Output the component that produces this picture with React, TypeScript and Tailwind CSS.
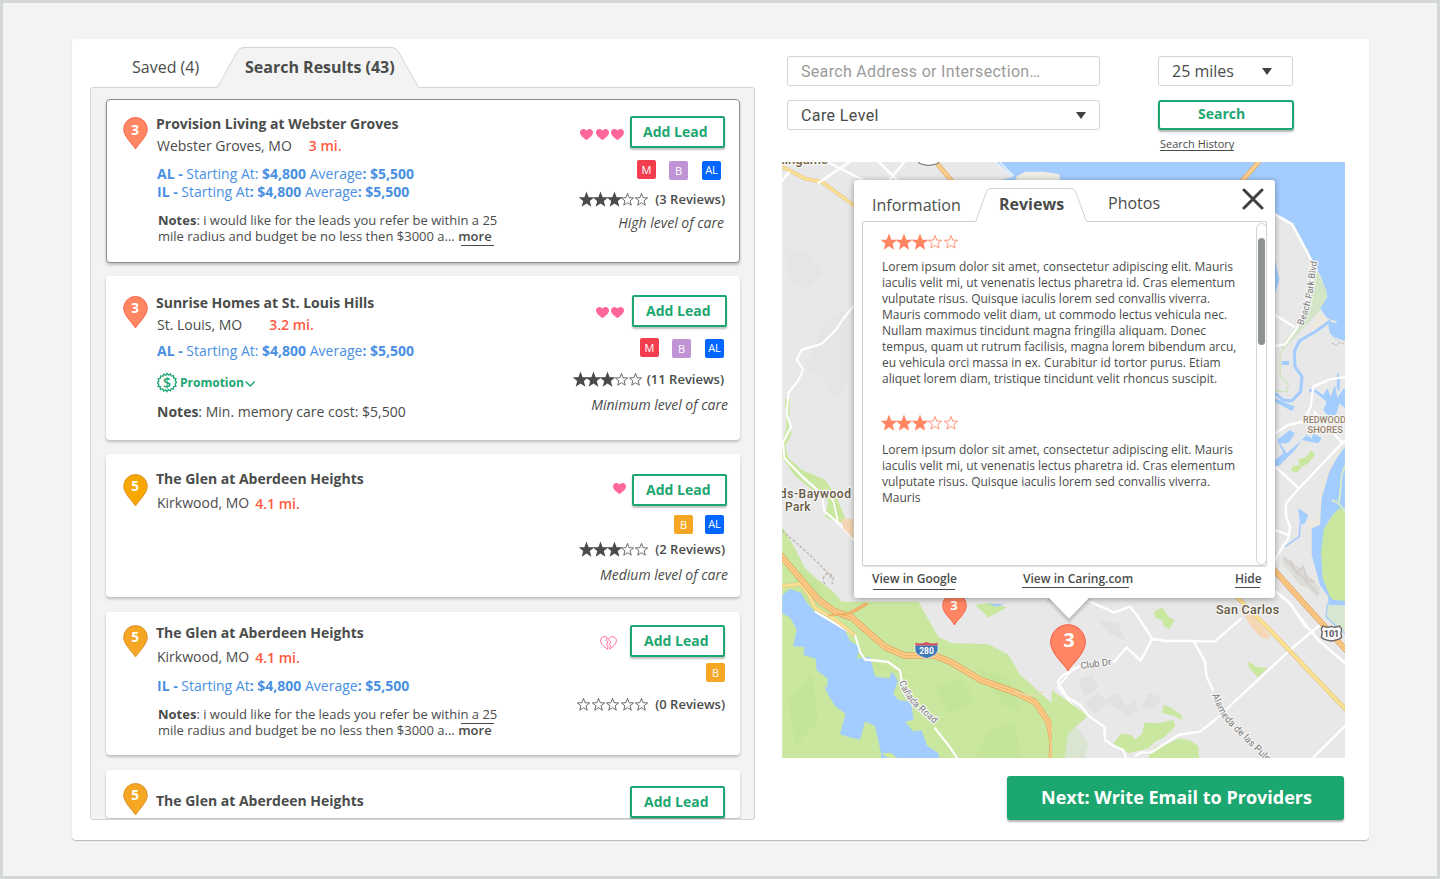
import type { ReactNode } from "react";

const STAR = "M12 .8l3 7.9 8.3.4-6.5 5.3 2.2 8.1-7-4.6-7 4.6 2.2-8.1L.7 9.100l8.300-.4z";

function Star({ filled, className }: { filled: boolean; className: string }) {
  return (
    <svg viewBox="0 0 24 24" className={className} overflow="visible">
      <path
        d={STAR}
        fill={filled ? "currentColor" : "none"}
        stroke="currentColor"
        strokeWidth={filled ? 2.4 : 1.5}
        strokeLinejoin="miter"
      />
    </svg>
  );
}

function Stars({ count, gap, size = "h-[13px] w-[13px]" }: { count: number; gap: string; size?: string }) {
  return (
    <div className={`flex ${gap}`}>
      {[0, 1, 2, 3, 4].map((i) => (
        <Star key={i} filled={i < count} className={size} />
      ))}
    </div>
  );
}

function Pin({ value, tone, baseline = 17.2 }: { value: string; tone: "coral" | "amber" | "gold"; baseline?: number }) {
  const fill = tone === "coral" ? "#ff8563" : tone === "amber" ? "#f5a623" : "#f8a700";
  const stroke = tone === "coral" ? "#fa654a" : "#d9932a";
  return (
    <svg width="25" height="33" viewBox="0 0 25 33" className="shrink-0">
      <path
        d="M12.500 32 C10 27.500 .7 19.500 .7 12.300 A11.800 11.800 0 0 1 24.300 12.300 C24.300 19.500 15 27.500 12.500 32Z"
        fill={fill}
        stroke={stroke}
        strokeWidth="1"
      />
      <text x="12" y={baseline} textAnchor="middle" fontSize="13.500" fontWeight="700" fill="#fff">
        {value}
      </text>
    </svg>
  );
}

function Heart() {
  return (
    <svg width="13" height="11" viewBox="0 0 13 11">
      <path d="M6.500 11 C4.500 9.200 0 6.800 0 3.400 C0 -.4 4.800 -1 6.500 1.500 C8.200 -1 13 -.4 13 3.400 C13 6.800 8.500 9.200 6.500 11Z" fill="#ff6699" />
    </svg>
  );
}

function BrokenHeart() {
  return (
    <svg width="17" height="14" viewBox="0 0 17 14" fill="none" stroke="#ff6699" strokeWidth="1">
      <path d="M7.300 13.200 C5 11 .6 8.500 .6 4.500 C.6 1 5 -.6 7.300 2 L6.200 4.300 L8 6 L6.500 8.500 L8.200 10.200 L7.300 13.200" />
      <path d="M9.700 13.200 C12 11 16.400 8.500 16.400 4.500 C16.400 1 12 -.6 9.300 2 L8.800 4 L10.800 6 L9.300 8.300 L10.600 10.300 L9.300 13.200" />
    </svg>
  );
}

function Hearts({ count }: { count: number }) {
  return (
    <div className="flex gap-[2.500px]">
      {Array.from({ length: count }, (_, i) => (
        <Heart key={i} />
      ))}
    </div>
  );
}

function AddLead({ indent = "pl-[12px]" }: { indent?: string }) {
  return (
    <button
      className={`flex h-8 w-[95px] items-center rounded-[2px] border-2 border-[#1ca670] bg-white pb-[2px] text-[14px] font-bold text-[#1ca670] shadow-[0_2px_2px_rgba(0,0,0,0.25)] ${indent}`}
    >
      Add Lead
    </button>
  );
}

function Badge({ label, className }: { label: string; className: string }) {
  return (
    <span className={`flex h-[19px] w-[19px] items-center justify-center rounded-[2px] text-[11px] text-white ${className}`}>
      {label}
    </span>
  );
}

function Title({ children }: { children: ReactNode }) {
  return <h3 className="h-5 whitespace-nowrap text-[14px] leading-5 font-bold">{children}</h3>;
}

function Place({ name, miles, gap, drop = "" }: { name: string; miles: string; gap: string; drop?: string }) {
  return (
    <p className={`flex h-5 items-start whitespace-nowrap pl-px text-[14px] leading-5 ${gap}`}>
      <span>{name}</span>
      <span className={`font-semibold text-[#ff5a40] ${drop}`}>{miles}</span>
    </p>
  );
}

function Price({ kind, boldColon = false }: { kind: string; boldColon?: boolean }) {
  return (
    <p className="h-[18px] whitespace-nowrap pl-px text-[14px] leading-[18px] text-[#4a90e2]">
      <b>{kind} - </b>Starting At{boldColon ? <b>: </b> : ": "}
      <b>$4,800</b> Average<b>: $5,500</b>
    </p>
  );
}

function LongNotes({ line }: { line: string }) {
  return (
    <div className="whitespace-nowrap pl-[2px] text-[13px] leading-4">
      <p>
        <b>Notes</b>: i would like for the leads you refer be within a 25
      </p>
      <p>
        mile radius and budget be no less then $3000 a...{" "}
        <a className="relative font-semibold">
          more
          <span className={`absolute left-[3px] h-px w-[33px] bg-[#4a4c4b] ${line}`} />
        </a>
      </p>
    </div>
  );
}

function Reviews({ count, stars, gap, between }: { count: number; stars: number; gap: string; between: string }) {
  return (
    <div className={`flex h-4 items-center ${between}`}>
      <Stars count={stars} gap={gap} />
      <span className="whitespace-nowrap text-[13px] leading-4 font-semibold">({count} Reviews)</span>
    </div>
  );
}

function Care({ children }: { children: ReactNode }) {
  return <p className="h-5 whitespace-nowrap text-[14px] leading-5 italic">{children}</p>;
}

function Card({ className, children }: { className: string; children: ReactNode }) {
  return (
    <article className={`flex w-[634px] shrink-0 items-start rounded-[4px] border bg-white pl-4 ${className}`}>
      {children}
    </article>
  );
}

const PLAIN = "border-transparent shadow-[0_2px_3px_rgba(0,0,0,0.22)]";

function ResultsPanel() {
  return (
    <section className="w-[665px]">
      <div className="relative h-[48px]">
        <svg className="absolute top-[8px] left-0" width="665" height="42" viewBox="90 47 665 42">
          <path d="M217 88 L237.500 51 Q240 47.500 244 47.500 H392 Q396 47.500 398 51 L419 88" fill="#f3f3f3" stroke="#d2d6d6" />
          <path d="M217.500 88.500 H418.500" stroke="#f3f3f3" strokeWidth="2" />
        </svg>
        <nav className="relative flex items-center pt-[16px] pl-[42px] text-[16px] leading-6">
          <span className="w-[113px]">Saved (4)</span>
          <span className="font-bold">Search Results (43)</span>
        </nav>
      </div>
      <Frame />
    </section>
  );
}

function Frame() {
  return (
    <div className="flex h-[733px] flex-col overflow-hidden rounded-[3px] border border-[#d2d6d6] bg-[#f3f3f3] pt-[11px] pl-[15px] [clip-path:polygon(0_0,127px_0,128px_1px,329px_1px,330px_0,100%_0,100%_100%,0_100%)]">
      <Card className="h-[164px] border-[#8d8f8e] shadow-[0_2px_3px_rgba(0,0,0,0.22)]">
        <div className="pt-[17px]">
          <Pin value="3" tone="coral" baseline={18.2} />
        </div>
        <div className="flex-1 pt-[14px] pl-[8px]">
          <Title>Provision Living at Webster Groves</Title>
          <div className="pt-[2px]">
            <Place name="Webster Groves, MO" miles="3 mi." gap="gap-[17px]" />
          </div>
          <div className="pt-[9px]">
            <Price kind="AL" />
            <Price kind="IL" boldColon />
          </div>
          <div className="pt-[11px]">
            <LongNotes line="top-[18px]" />
          </div>
        </div>
        <div className="flex flex-col items-end pt-[16px] pr-[14px]">
          <div className="flex items-center gap-[6px]">
            <div className="pt-[5px]">
              <Hearts count={3} />
            </div>
            <AddLead indent="pl-[11px]" />
          </div>
          <div className="flex pt-[12px] pr-[4px]">
            <Badge label="M" className="bg-[#f23d4f] pt-px" />
            <Badge label="B" className="mt-px ml-[13px] bg-[#c093d4] pt-px" />
            <Badge label="AL" className="mt-px ml-[14px] bg-[#0066ff]" />
          </div>
          <div className="pt-[11px]">
            <Reviews count={3} stars={3} gap="gap-[0.750px]" between="gap-[7px]" />
          </div>
          <div className="pt-[6px] pr-px">
            <Care>High level of care</Care>
          </div>
        </div>
      </Card>

      <Card className={`mt-[13px] h-[164px] ${PLAIN}`}>
        <div className="pt-[19px]">
          <Pin value="3" tone="coral" />
        </div>
        <div className="flex-1 pt-[16px] pl-[8px]">
          <Title>Sunrise Homes at St. Louis Hills</Title>
          <div className="pt-[2px]">
            <Place name="St. Louis, MO" miles="3.2 mi." gap="gap-[27px]" />
          </div>
          <div className="pt-[7px]">
            <Price kind="AL" />
          </div>
          <button className="mt-[12px] flex h-[21px] items-center pl-px text-[#1ca670]">
            <svg width="20" height="21" viewBox="0 0 20 20" fill="none" stroke="currentColor" strokeWidth="1.300">
              <path d="M10 .8l1.500 1.800 2-1.200.8 2.200 2.300-.4.1 2.400 2.300.5-.9 2.100 1.600 1.800-1.700 1.600.9 2.200-2.300.4-.1 2.400-2.300-.4-.9 2.200-2-1.200L10 19.200l-1.500-1.800-2 1.200-.8-2.200-2.300.4-.1-2.400L1 14l.9-2.200L.3 10l1.700-1.600L1.100 6.200l2.300-.4.100-2.400 2.300.4.900-2.200 2 1.200z" />
              <text x="10" y="15" textAnchor="middle" fontSize="14" fontWeight="600" fill="currentColor" stroke="none">$</text>
            </svg>
            <span className="pl-[3px] text-[12px] leading-5 font-bold">Promotion</span>
            <svg width="11" height="8" viewBox="0 0 11 8" fill="none" stroke="currentColor" strokeWidth="1.500" className="mt-[3px] ml-px">
              <path d="M.6 1.500 L5.200 6 L9.800 1.500" />
            </svg>
          </button>
          <p className="pt-[9px] pl-px text-[14px] leading-5">
            <b>Notes</b>: Min. memory care cost: $5,500
          </p>
        </div>
        <div className="flex flex-col items-end pt-[18px] pr-[11px]">
          <div className="flex items-center gap-[8px] pr-px">
            <div className="pt-[3px]">
              <Hearts count={2} />
            </div>
            <AddLead />
          </div>
          <div className="flex pt-[11px] pr-[4px]">
            <Badge label="M" className="bg-[#f23d4f] pt-px" />
            <Badge label="B" className="mt-px ml-[13px] bg-[#c093d4] pt-px" />
            <Badge label="AL" className="mt-px ml-[14px] bg-[#0066ff]" />
          </div>
          <div className="pt-[13px] pr-[4px]">
            <Reviews count={11} stars={3} gap="gap-[0.750px]" between="gap-[5px]" />
          </div>
          <div className="pt-[8px]">
            <Care>Minimum level of care</Care>
          </div>
        </div>
      </Card>

      <Card className={`mt-[14px] h-[143px] ${PLAIN}`}>
        <div className="pt-[19px]">
          <Pin value="5" tone="gold" />
        </div>
        <div className="flex-1 pt-[14px] pl-[8px]">
          <Title>The Glen at Aberdeen Heights</Title>
          <div className="pt-[4px]">
            <Place name="Kirkwood, MO" miles="4.1 mi." gap="gap-[6px]" drop="pt-px" />
          </div>
        </div>
        <div className="flex flex-col items-end pt-[19px] pr-[11px]">
          <div className="flex items-start gap-[6px] pr-px">
            <div className="pt-[9px]">
              <Hearts count={1} />
            </div>
            <AddLead />
          </div>
          <div className="flex pt-[9px] pr-[4px]">
            <Badge label="B" className="bg-[#f5a623] pt-px" />
            <Badge label="AL" className="ml-[12px] bg-[#0066ff]" />
          </div>
          <div className="pt-[7px] pr-[3px]">
            <Reviews count={2} stars={3} gap="gap-[0.750px]" between="gap-[7px]" />
          </div>
          <div className="pt-[8px]">
            <Care>Medium level of care</Care>
          </div>
        </div>
      </Card>

      <Card className={`mt-[15px] h-[143px] ${PLAIN}`}>
        <div className="pt-[12px]">
          <Pin value="5" tone="amber" baseline={17} />
        </div>
        <div className="flex-1 pt-[10px] pl-[8px]">
          <Title>The Glen at Aberdeen Heights</Title>
          <div className="pt-[4px]">
            <Place name="Kirkwood, MO" miles="4.1 mi." gap="gap-[6px]" drop="pt-px" />
          </div>
          <div className="pt-[10px]">
            <Price kind="IL" boldColon />
          </div>
          <div className="pt-[11px]">
            <LongNotes line="top-[2px]" />
          </div>
        </div>
        <div className="flex flex-col items-end pt-[12px] pr-[14px]">
          <div className="flex items-center gap-[13px]">
            <div className="pt-[3px]">
              <BrokenHeart />
            </div>
            <AddLead />
          </div>
          <div className="pt-[6px]">
            <Badge label="B" className="bg-[#f5a623] pt-px" />
          </div>
          <div className="pt-[14px]">
            <Reviews count={0} stars={0} gap="gap-[1.500px]" between="gap-[7px]" />
          </div>
        </div>
      </Card>

      <Card className={`mt-[15px] h-[48px] ${PLAIN}`}>
        <div className="pt-[12px]">
          <Pin value="5" tone="amber" baseline={17} />
        </div>
        <div className="flex-1 pt-[20px] pl-[8px]">
          <Title>The Glen at Aberdeen Heights</Title>
        </div>
        <div className="pt-[15px] pr-[14px]">
          <AddLead />
        </div>
      </Card>
    </div>
  );
}

function MapDrawing() {
  return (
    <svg className="block" width="563" height="596" viewBox="782 162 563 596">
      <rect x="782" y="162" width="563" height="596" fill="#e8e8e8" />

      {/* western hills and reservoir */}
      <g transform="translate(775 155) scale(.33333 .39355)">
        <path d="M150 420 L240 380 V560 L180 620 L140 560 L90 540Z M30 240 L100 250 L150 300 L100 340 L50 320Z" fill="#e2e2e2" opacity=".5" />
        <path d="M22 945 L60 1000 L90 1050 L130 1080 L175 1110 L200 1135 H430 L450 1165 L490 1225 L530 1240 L640 1243 L700 1270 L735 1320 L800 1370 L870 1420 V1560 H22Z" fill="#c9e79f" />
        <path d="M30 620 H45 L42 680 L50 710 L30 740 L40 770 L80 800 L150 825 L185 870 L215 930 L190 935 L150 920 L160 880 L110 850 L60 815 L22 770 V730 L35 690Z" fill="#c9e79f" />
        <path d="M40 1040 L120 1080 L190 1200 L300 1290 L420 1330 L300 1300 L200 1250 L100 1150Z M600 1300 L700 1330 L740 1420 L690 1400Z M480 1350 L560 1330 L600 1390 L520 1420Z M640 1460 L720 1440 L740 1540 L600 1530Z M40 1380 L110 1320 L130 1440 L60 1500Z" fill="#bedf93" opacity=".45" />
        <path d="M22 1118 L45 1103 L78 1112 L95 1138 L118 1160 L160 1180 L205 1200 L225 1235 L255 1250 L245 1280 L285 1275 L300 1325 L345 1330 L350 1312 L368 1335 L355 1370 L372 1385 L408 1390 L416 1435 L390 1440 L415 1465 L440 1462 L455 1500 L490 1520 L500 1560 H425 L410 1538 L380 1540 L345 1520 L318 1520 L300 1450 L270 1440 L255 1485 L225 1480 L195 1472 L212 1420 L180 1400 L155 1365 L158 1330 L125 1310 L122 1280 L85 1270 L88 1250 L55 1248 L65 1205 L45 1175 L22 1165Z" fill="#a3ccff" />
        <path d="M318 1518 L350 1528 L378 1550 H318Z M145 1352 L165 1355 L180 1365 L158 1362Z" fill="#a3ccff" />
        <path d="M318 1520 L348 1519 L392 1552 H372Z" fill="#c9e79f" />
        <path d="M600 1143 L640 1175 L695 1150 L650 1138Z" fill="#c9e79f" />
        <path d="M638 1140 L665 1148 L690 1140Z" fill="#a3ccff" />
        <g fill="none" stroke="#fff" strokeLinejoin="round">
          <path strokeWidth="6" d="M240 380 L210 410 L182 445 L140 480 L80 495 L65 520 L85 545 L68 575 L40 605 L35 660 L48 690 L24 730 L28 770 L85 820 L140 860 L148 905 L190 935 L240 980" />
          <path strokeWidth="5" d="M152 850 L175 880 L190 935" />
          <path strokeWidth="6" d="M120 1160 L180 1190 L240 1220 L255 1262 L270 1282 L340 1288 L375 1310 L382 1345 M478 1455 L525 1505 L560 1550" />
          <path strokeWidth="5" d="M900 1405 L848 1352 L900 1300" />
        </g>
        <path d="M22 955 C70 990 140 1040 175 1080 M150 1090 a15 15 0 1 1 20 0" fill="none" stroke="#b5aaa0" strokeWidth="3" strokeDasharray="8 5" />
        <path d="M22 30 L90 60 L140 68 L240 130 M22 1095 L75 1090 L100 1115 L120 1150 L180 1180 L240 1220" fill="none" stroke="#e8c98a" strokeWidth="10" />
        <path d="M22 30 L90 60 L140 68 L240 130 M22 1095 L75 1090 L100 1115 L120 1150 L180 1180 L240 1220" fill="none" stroke="#fde293" strokeWidth="6" />
        <g fill="none" strokeLinejoin="round">
          <path d="M15 1015 L80 1080 L130 1130 L180 1160 L230 1175 L270 1205 L330 1250 L390 1272 H480 L530 1290 L620 1335 L720 1365 L780 1390 L820 1440 L832 1490 L828 1560" stroke="#dfa65e" strokeWidth="17" />
          <path d="M15 1015 L80 1080 L130 1130 L180 1160 L230 1175 L270 1205 L330 1250 L390 1272 H480 L530 1290 L620 1335 L720 1365 L780 1390 L820 1440 L832 1490 L828 1560" stroke="#fdcb88" strokeWidth="13" />
          <path d="M15 1015 L80 1080 L130 1130 L180 1160 L230 1175 L270 1205 L330 1250 L390 1272 H480 L530 1290 L620 1335 L720 1365 L780 1390 L820 1440 L832 1490 L828 1560" stroke="#eaa960" strokeWidth="2" />
          <path d="M160 1170 L220 1165 L275 1138 M200 1170 L240 1160 L280 1140" stroke="#efb26b" strokeWidth="5" />
          <path d="M720 1365 L770 1375 L810 1362" stroke="#e6dcae" strokeWidth="3" />
        </g>
        <path d="M200 925 L235 925 V975 L205 950Z" fill="#f4d6b4" />
      </g>

      {/* bay shoreline above the popup */}
      <g transform="translate(770 30) scale(.3827 .33333)">
        <path d="M590 396 H1503 V455 H590 L635 440Z" fill="#a3ccff" />
        <path d="M640 455 L645 438 L668 425 L715 425 L757 433 V455Z" fill="#efece3" />
        <path d="M590 396 L632 442 M600 396 L636 438" fill="none" stroke="#eef3f8" strokeWidth="4" />
        <path d="M150 396 L260 460 M215 390 L125 460 M50 425 L30 455 M280 390 L340 460 M355 390 L305 460" fill="none" stroke="#fff" strokeWidth="7" />
        <path d="M425 385 L480 460 M1285 385 L1228 460" fill="none" stroke="#e0ac60" strokeWidth="13" />
        <path d="M425 385 L480 460 M1285 385 L1228 460" fill="none" stroke="#fdce8c" strokeWidth="9" />
        <path d="M388 390 Q388 404 400 403 Q414 409 428 403 Q442 404 441 390Z" fill="#fff" stroke="#888" strokeWidth="4" />
      </g>

      {/* eastern shore */}
      <g transform="translate(1240 155) scale(.33333)">
        <path d="M100 20 H320 V560 L295 560 L270 535 L262 500 L285 500 L262 490 L240 460 L262 425 L245 370 L205 290 L160 205 L100 170Z" fill="#a3ccff" />
        <path d="M192 270 L205 285 L212 320 L238 360 L261 410 L258 432 L235 470 L190 520 L130 585 L120 575 L165 520 L205 440 L218 370 L215 320Z" fill="#d2e5c6" />
        <path d="M235 470 L262 492 L320 505 V572 L290 555 L268 510 L215 540 L200 530 L225 500Z" fill="#eee9df" />
        <path d="M262 498 L290 505 L288 480 L320 485 V560 L290 550 L275 535Z" fill="#a3ccff" />
        <path d="M275 565 L290 570 L300 562 L320 568" fill="none" stroke="#b5aea4" strokeWidth="3" strokeDasharray="7 4" />
        <path d="M130 585 L120 595 V660 L145 690 L140 710 L105 708" fill="none" stroke="#cfe5c0" strokeWidth="4" />
        <path d="M272 497 L225 530 L178 558 L163 590 L165 635 L186 665 L182 710 L155 738 L130 735 L105 715" fill="none" stroke="#a3ccff" strokeWidth="9" strokeLinejoin="round" />
        <path d="M105 315 L118 375 L105 415Z M125 618 H147 V630 H125Z M105 730 L165 755 L155 768 L105 740Z M208 702 H222 L250 720 L262 700 L272 725 L285 690 L292 728 L312 700 L320 715 V762 L298 745 L290 775 L270 790 L250 765 L260 740 L225 712 H208Z M292 650 L300 670 L298 710 L290 700Z M112 855 L150 825 L165 835 L145 865 L120 865 L140 895 L175 865 L200 840 L235 865 L185 855 L165 885 L120 930 L105 935 V915 L130 895Z M175 1060 L205 1080 L195 1105 L180 1110Z M220 835 L245 850 L235 865 L215 850Z" fill="#a3ccff" />
        <path d="M180 1110 L178 1145 L135 1175" fill="none" stroke="#a3ccff" strokeWidth="5" />
        <path d="M215 885 L225 900 L205 925 L185 935 L170 955 L152 945 L160 932 L178 930 L175 912 L195 908Z" fill="#c9e79f" />
        <path d="M320 855 L285 900 L262 945 L240 1010 L235 1090 L205 1095 L205 1130 L213 1190 L232 1260 L262 1300 L258 1355 L320 1360Z" fill="#ece8df" />
        <path d="M320 868 L290 910 L268 950 L245 1030 L240 1110 L215 1120 L215 1200 L240 1290 L265 1325 V1350 L320 1352Z" fill="#a3ccff" />
        <path d="M320 1068 L298 1060 L278 1080 L252 1120 L243 1190 L248 1270 L270 1325 L282 1335 L320 1338Z" fill="#c9e79f" />
        <path d="M320 920 L305 960 L300 1020 L296 1045 L275 1035 M296 1045 L320 1075" fill="none" stroke="#d7ebcb" strokeWidth="6" />
        <path d="M262 1350 L320 1355 V1440 L290 1420 L255 1385Z" fill="#d7e6cf" />
        <path d="M262 1345 L258 1385 L320 1440" fill="none" stroke="#a3ccff" strokeWidth="4" />
        <g fill="none" stroke="#fff" strokeWidth="7" strokeLinejoin="round">
          <path d="M100 176 L155 207 L190 270 L213 315 L218 370 L205 430 L170 520 L135 568 L105 573" />
          <path d="M105 480 L165 517 M105 835 L145 810 L190 800 L212 755 L220 695 L270 673 L320 665" />
          <path d="M222 770 L305 862 M320 850 L177 1000 L138 1045 L138 1085 L150 1115 L145 1150 L125 1180 L100 1225 M105 935 L177 1000 M105 1125 L145 1140" />
          <path d="M100 1305 L150 1345 L200 1420" />
        </g>
        <path d="M125 1200 L150 1215 L215 1270 L240 1300 L235 1330 L205 1300 L180 1290 L150 1250 L130 1230Z" fill="#dedcd8" />
        <path d="M133 1210 L235 1318 M150 1215 L170 1255 L190 1235 L200 1275 L225 1280" fill="none" stroke="#d3d0cc" strokeWidth="6" />
      </g>

      {/* San Carlos area */}
      <g transform="translate(1055 560) scale(.33333)">
        <path d="M-10 390 L100 467 L40 520 L30 595 H-10Z" fill="#c9e79f" />
        <path d="M40 520 L65 500 L100 550 L90 595 H28Z" fill="#d9e5d0" />
        <path d="M175 550 L200 520 L230 525 L240 540 L262 520 L268 488 L310 490 L355 480 L360 500 L330 530 L300 545 L280 565 L240 575 L220 580Z M325 435 L345 442 L380 465 L382 480 L350 465 L322 460Z M275 600 L300 560 L345 548 L372 535 L400 540 L430 558 L432 600Z M578 303 L605 320 L637 325 L608 352 L583 325Z M297 155 L322 142 L340 170 L358 180 L345 207 L328 200 L322 182 L300 172Z" fill="#c9e79f" />
        <path d="M90 430 L130 400 L150 420 L190 400 L215 440 L240 420 L250 450 L220 470 L160 430 L120 460Z M70 360 L110 345 L130 380 L90 410Z M130 180 L190 190 L210 240 L160 220Z M280 400 L320 410 L300 450 L260 440Z" fill="#dedede" opacity=".8" />
        <path d="M565 160 L590 165 L645 225 L640 238 L615 230 L585 195Z" fill="#f5d7b5" />
        <g fill="none" stroke="#fff" strokeWidth="7" strokeLinejoin="round">
          <path d="M95 120 L177 158 L225 140 L245 165 L292 237 L335 243 H415 L478 245 L560 175" />
          <path d="M175 308 L215 262 L257 302 L292 237 M415 243 L450 305 L455 350 L475 392" />
          <path d="M75 318 L25 345 L8 365 L35 410 L75 435 L100 467 L148 500 L150 540 L180 560 L205 570 L215 600" />
          <path d="M240 590 L255 578 L290 577 L370 525 L435 515 L480 480 L560 405 L705 270 L800 190 M770 597 L870 498" />
          <path d="M660 92 L700 125 L745 185 L790 240 L880 318" />
        </g>
        <path d="M530 95 L650 215 L830 405 L880 455" fill="none" stroke="#e3c375" strokeWidth="13" />
        <path d="M530 95 L650 215 L830 405 L880 455" fill="none" stroke="#fde293" strokeWidth="9" />
        <path d="M650 22 L880 278" fill="none" stroke="#dfa55f" strokeWidth="17" />
        <path d="M650 22 L880 278" fill="none" stroke="#fdcb88" strokeWidth="12" />
        <path d="M650 22 L880 278" fill="none" stroke="#e8a862" strokeWidth="2" />
        <path d="M804 198 Q815 205 829 199 Q842 205 853 198 L860 207 Q855 220 860 232 Q850 241 829 243 Q808 241 799 232 Q804 218 799 207Z" fill="#fff" stroke="#666" strokeWidth="4" />
      </g>

      <path id="alameda" d="M1212 695 L1219 711 Q1223 719 1232 728 L1274 769" fill="none" />
      <path id="canada" d="M899 682 Q904 696 914 706 L940 729" fill="none" />
      <path id="beach" d="M1303 326 Q1311 305 1313 290 L1318 255" fill="none" />
      <g stroke="#f4f4f4" strokeWidth="2.500" paintOrder="stroke" strokeLinejoin="round" fontFamily="Roboto, sans-serif">
        <text x="828" y="164" textAnchor="end" fontSize="13" fontWeight="500" fill="#75663f">Burlingame</text>
        <text x="851.500" y="498" textAnchor="end" fontSize="12" fontWeight="500" letterSpacing=".55" fill="#665a43">Highlands-Baywood</text>
        <text x="785" y="511" fontSize="12" fontWeight="500" letterSpacing=".3" fill="#665a43">Park</text>
        <text x="1216" y="614" fontSize="12.500" fontWeight="500" letterSpacing=".3" fill="#665a43">San Carlos</text>
        <text x="1303" y="423" fontSize="9" fontWeight="500" fill="#97826b">REDWOOD</text>
        <text x="1307.500" y="433" fontSize="9.300" fontWeight="500" fill="#97826b">SHORES</text>
        <g fill="#777" fontSize="10">
          <text fontSize="9.500" transform="translate(1081 669) rotate(-8)">Club Dr</text>
          <text fontSize="9.300">
            <textPath href="#canada">Cañada Road</textPath>
          </text>
          <text fontSize="9.200">
            <textPath href="#beach">Beach Park Blvd</textPath>
          </text>
          <text fontSize="9.700">
            <textPath href="#alameda">Alameda de las Pulgas</textPath>
          </text>
        </g>
      </g>
      <text x="1331.500" y="637" textAnchor="middle" fontSize="9" fontWeight="700" fill="#555" fontFamily="Roboto, sans-serif">101</text>
      <path d="M915 645 H938 V650 Q937 656 926.500 658.500 Q916 656 915 650Z" fill="#3f78b8" stroke="#fff" strokeWidth=".6" />
      <path d="M915.500 645.500 V642.500 Q921 644.500 926.500 642 Q932 644.500 937.500 642.500 V645.500Z" fill="#d25461" />
      <text x="926.500" y="653.500" textAnchor="middle" fontSize="8.500" fontWeight="700" fill="#fff" fontFamily="Roboto, sans-serif">280</text>

      {/* markers */}
      <g stroke="#fa654a" fill="#ff8563">
        <path d="M954.500 625 C952 619.500 942.700 613.500 942.700 605.500 A11.800 11.800 0 0 1 966.300 605.500 C966.300 613.500 957 619.500 954.500 625Z" />
        <path d="M1068 671 C1064.500 664 1050.700 654 1050.700 642 A17.300 17.300 0 0 1 1085.300 642 C1085.300 654 1071.500 664 1068 671Z" stroke="#f65c43" />
      </g>
      <g fill="#fff" fontWeight="700" textAnchor="middle">
        <text x="954" y="609.500" fontSize="13">3</text>
        <text x="1069" y="647" fontSize="20">3</text>
      </g>
    </svg>
  );
}

function Review({ children }: { children: ReactNode }) {
  return (
    <>
      <div className="text-[#ff8563]">
        <Stars count={3} gap="gap-[1.400px]" size="h-[14px] w-[14px]" />
      </div>
      <p className="w-[366px] text-[12px] leading-4 whitespace-pre-line">{children}</p>
    </>
  );
}

function FooterLink({ children, line }: { children: ReactNode; line: string }) {
  return (
    <a className="relative block w-fit text-[12px] leading-4 font-semibold whitespace-nowrap">
      {children}
      <span className={`absolute h-px bg-[#4a4c4b] ${line}`} />
    </a>
  );
}

function Popup() {
  return (
    <div className="absolute top-[18px] left-[72px] h-[418px] w-[421px] rounded-[3px] bg-white shadow-[0_1px_6px_rgba(0,0,0,0.35)]">
      <svg className="absolute top-[417px] left-[190px]" width="50" height="30" viewBox="0 0 50 30">
        <path d="M4 2 L25 24 L46 2" fill="none" stroke="#000" strokeOpacity=".07" strokeWidth="5" />
        <path d="M4 1 L25 23 L46 1" fill="none" stroke="#000" strokeOpacity=".1" strokeWidth="2" />
        <path d="M4 0 L25 21.500 L46 0Z" fill="#fff" />
      </svg>
      <div className="flex h-[386px] flex-col px-[8px]">
        <nav className="flex h-[41px] shrink-0 items-start text-[16px] leading-6">
          <span className="w-[127px] pt-[13px] pl-[10px]">Information</span>
          <span className="w-[109px] pt-[12px] pl-[10px] font-bold">Reviews</span>
          <span className="flex-1 pt-[11px] pl-[10px]">Photos</span>
          <svg width="22" height="22" viewBox="0 0 22 22" className="mt-[8px] mr-[3px]" stroke="#3f4140" strokeWidth="3" strokeLinecap="round">
            <path d="M2 2 L20 20 M20 2 L2 20" />
          </svg>
        </nav>
        <div className="relative flex flex-1 justify-between rounded-[2px] border border-[#ced2d2] pl-[19px] shadow-[0_1px_1px_rgba(0,0,0,0.12)]">
          <svg className="absolute -top-[34px] left-[112px]" width="113" height="36" viewBox="975 188 113 36">
            <path d="M975.500 222 L986.500 191.500 Q987.800 188.500 991 188.500 H1071 Q1074 188.500 1075.500 191.500 L1086.700 222" fill="none" stroke="#ced2d2" />
            <path d="M976.500 221.500 H1086" stroke="#fff" strokeWidth="2" />
          </svg>
          <div className="pt-[13px]">
            <div className="flex flex-col gap-[10px]">
              <Review>
                {`Lorem ipsum dolor sit amet, consectetur adipiscing elit. Mauris
                iaculis velit mi, ut venenatis lectus pharetra id. Cras elementum
                vulputate risus. Quisque iaculis lorem sed convallis viverra.
                Mauris commodo velit diam, ut commodo lectus vehicula nec.
                Nullam maximus tincidunt magna fringilla aliquam. Donec
                tempus, quam ut rutrum facilisis, magna lorem bibendum arcu,
                eu vehicula orci massa in ex. Curabitur id tortor purus. Etiam
                aliquet lorem diam, tristique tincidunt velit rhoncus suscipit.`}
              </Review>
            </div>
            <div className="mt-[29px] flex flex-col gap-[12px]">
              <Review>
                {`Lorem ipsum dolor sit amet, consectetur adipiscing elit. Mauris
                iaculis velit mi, ut venenatis lectus pharetra id. Cras elementum
                vulputate risus. Quisque iaculis lorem sed convallis viverra.
                Mauris`}
              </Review>
            </div>
          </div>
          <div className="mt-[1px] -mr-px h-[342px] w-[11px] shrink-0 rounded-full border border-[#ced6d6] bg-white px-px pt-[14px]">
            <div className="h-[107px] w-[7px] rounded-full bg-[#8f9291]" />
          </div>
        </div>
      </div>
      <div className="flex pt-[5px] pl-[18px]">
        <div className="w-[151px]">
          <FooterLink line="left-px top-[18px] w-[82px]">View in Google</FooterLink>
        </div>
        <div className="w-[212px]">
          <FooterLink line="-left-px top-[16px] w-[107px]">View in Caring.com</FooterLink>
        </div>
        <FooterLink line="left-0 top-[16px] w-[25px]">Hide</FooterLink>
      </div>
    </div>
  );
}

function Caret() {
  return (
    <svg width="10" height="7" viewBox="0 0 10 7">
      <path d="M0 0 H10 L5 7Z" fill="#3f4140" />
    </svg>
  );
}

const FIELD = "flex h-[30px] items-center rounded-[3px] border border-[#d0d4d4] pl-[13px] text-[16px]";

function SearchColumn() {
  return (
    <section className="w-[563px] pt-[17px]">
      <div className="flex gap-[58px] pl-[5px]">
        <div className="flex w-[313px] flex-col gap-[14px]">
          <div className={`${FIELD} pt-px font-[Roboto] tracking-[0.32px] text-[#9b9b9b]`}>Search Address or Intersection…</div>
          <div className={`${FIELD} justify-between pt-px pr-[13px] font-[Roboto] tracking-[0.4px]`}>
            Care Level
            <Caret />
          </div>
        </div>
        <div className="w-[136px]">
          <div className={`${FIELD} w-[135px] justify-between pr-[20px]`}>
            25 miles
            <Caret />
          </div>
          <button className="mt-[14px] flex h-[30px] w-[136px] items-center rounded-[3px] border-2 border-[#1ca670] pb-[3px] pl-[38px] text-[14px] font-bold text-[#1ca670] shadow-[0_2px_2px_rgba(0,0,0,0.3)]">
            Search
          </button>
          <a className="relative mt-[7px] ml-[2px] block h-[14px] w-[74px] border-b border-[#4a4c4b] text-[11px] leading-[14px] whitespace-nowrap">
            Search History
          </a>
        </div>
      </div>
      <div className="relative mt-[11px] h-[596px]">
        <MapDrawing />
        <Popup />
      </div>
      <button className="mt-[18px] ml-[225px] flex h-[44px] w-[337px] items-center rounded-[3px] bg-[#1ca670] pb-[2px] pl-[34px] text-[18px] font-bold whitespace-nowrap text-white shadow-[0_2px_2px_rgba(0,0,0,0.3)]">
        Next: Write Email to Providers
      </button>
    </section>
  );
}

export default function App() {
  return (
    <div className="h-[879px] w-[1440px] overflow-hidden border-[3px] border-[#d3d7d7] bg-[#f3f3f3] pt-[36px] pl-[69px] font-['Open_Sans',sans-serif] text-[#4a4c4b]">
      <main className="flex h-[801px] w-[1297px] gap-[27px] rounded-[4px] bg-white pl-[18px] shadow-[0_1px_1px_rgba(0,0,0,0.25)]">
        <ResultsPanel />
        <SearchColumn />
      </main>
    </div>
  );
}
